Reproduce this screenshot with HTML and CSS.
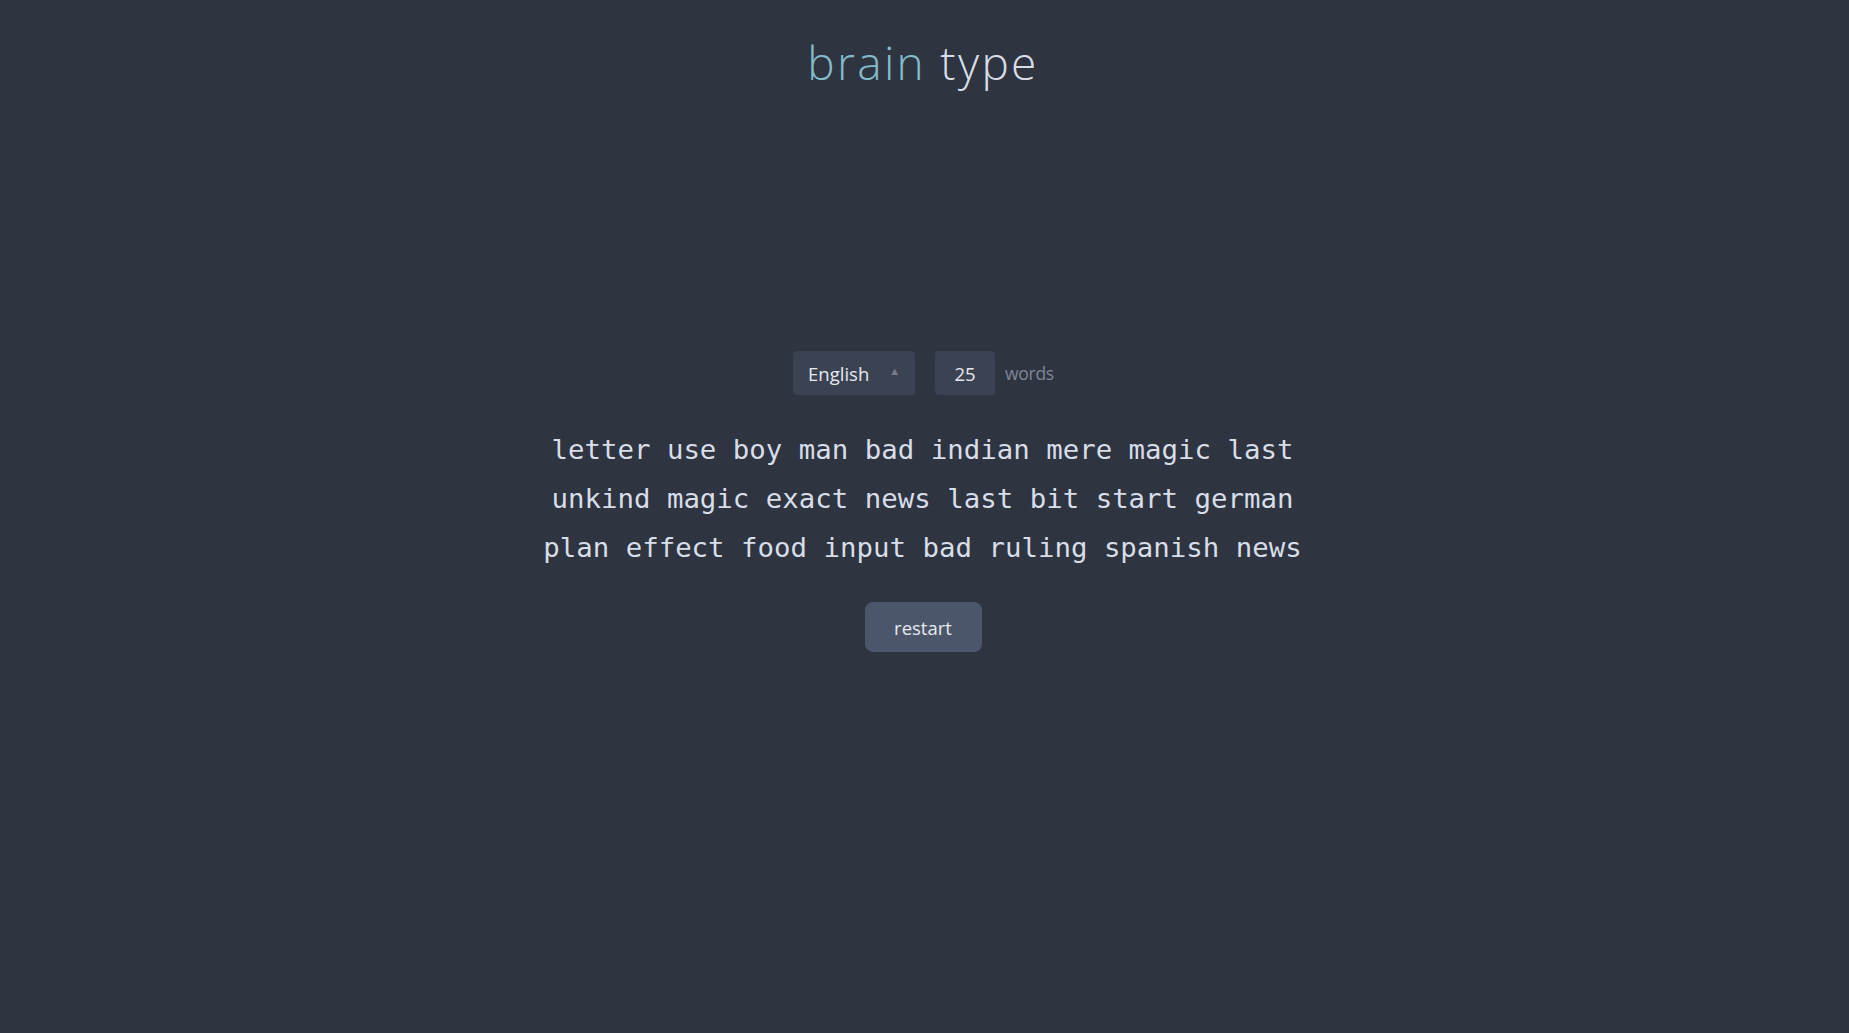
FILE: index.html
```html
<!DOCTYPE html>
<html lang="en">
<head>
<meta charset="utf-8">
<title>brain type</title>
<link rel="stylesheet" href="styles.css">
</head>
<body>
<header class="header">
  <h1 class="logo"><span class="logo-accent">brain</span> type</h1>
</header>
<main class="main">
  <div class="controls">
    <div class="select">
      <span class="select-label">English</span>
      <span class="select-arrow">&#9650;</span>
    </div>
    <div class="count">
      <span class="count-box">25</span>
      <span class="count-label">words</span>
    </div>
  </div>
  <div class="words">
    <div class="line">letter use boy man bad indian mere magic last</div>
    <div class="line">unkind magic exact news last bit start german</div>
    <div class="line">plan effect food input bad ruling spanish news</div>
  </div>
  <button class="restart" type="button">restart</button>
</main>
</body>
</html>
```

FILE: styles.css
```css
html, body {
  margin: 0;
  padding: 0;
  background: #2e3440;
  height: 100%;
}

body {
  font-family: "Open Sans", "Noto Sans", sans-serif;
  color: #d8dee9;
}

.header {
  display: flex;
  justify-content: center;
  padding-top: 39px;
}

.logo {
  margin: 0;
  font-size: 46px;
  line-height: 1;
  font-weight: 300;
  letter-spacing: 2.3px;
  color: #d8dee9;
  margin-left: -3px;
}

.logo-accent {
  color: #82bccb;
}

.main {
  display: flex;
  flex-direction: column;
  align-items: center;
  padding-top: 266px;
}

.controls {
  display: flex;
  align-items: center;
  gap: 20px;
  height: 44px;
  margin-left: -2px;
}

.select {
  display: flex;
  align-items: center;
  justify-content: space-between;
  box-sizing: border-box;
  width: 122px;
  height: 44px;
  padding: 0 15px 0 15px;
  background: #3b4252;
  border-radius: 4px;
  font-size: 18.5px;
  color: #e5e9f0;
}

.select-arrow {
  font-size: 11px;
  color: #757d8d;
  margin-top: -5px;
}

.count {
  display: flex;
  align-items: center;
  gap: 10px;
}

.count-box {
  display: flex;
  align-items: center;
  justify-content: center;
  width: 60px;
  height: 44px;
  background: #3b4252;
  border-radius: 4px;
  font-size: 18.5px;
  color: #e5e9f0;
}

.count-label {
  font-size: 17.5px;
  letter-spacing: -0.3px;
  color: #7f8797;
}

.words {
  margin-top: 30px;
  margin-left: -4px;
  display: flex;
  flex-direction: column;
  align-items: center;
  font-family: "DejaVu Sans Mono", monospace;
  font-size: 27.4px;
  line-height: 49px;
  color: #d8dee9;
}

.restart {
  margin-top: 30px;
  width: 117px;
  height: 50px;
  border: none;
  border-radius: 8px;
  background: #4c566a;
  color: #e5e9f0;
  font-family: "Open Sans", "Noto Sans", sans-serif;
  font-size: 18.5px;
  padding: 0;
  margin-left: -3px;
}
```
